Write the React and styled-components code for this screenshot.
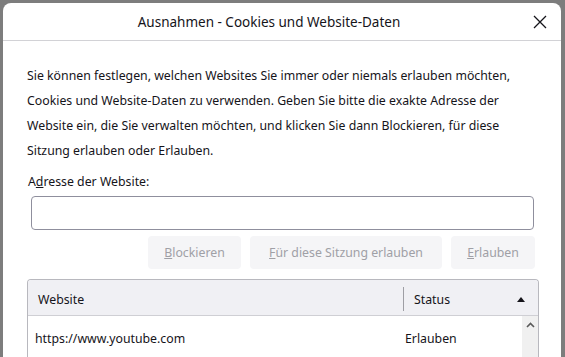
import React from "react";
import styled, { createGlobalStyle } from "styled-components";

const GlobalStyle = createGlobalStyle`
  html, body {
    margin: 0;
    padding: 0;
    background: #7d7d7d;
    overflow: hidden;
  }
  * { box-sizing: border-box; }
`;

const Page = styled.div`
  width: 565px;
  height: 357px;
  padding: 3px 4px 0 3px;
  overflow: hidden;
`;

const Dialog = styled.div`
  width: 558px;
  height: 354px;
  overflow: hidden;
  background: #fff;
  border-radius: 8px 8px 0 0;
  font-family: "Noto Sans", "Open Sans", sans-serif;
  color: #15141a;
`;

const TitleBar = styled.div`
  height: 38px;
  border-bottom: 1px solid #d2d2d6;
  display: flex;
  align-items: center;
  position: relative;
`;

const Title = styled.div`
  flex: 1;
  text-align: center;
  font-size: 13.5px;
  padding-right: 26px;
`;

const CloseButton = styled.button`
  position: absolute;
  right: 10px;
  top: 8px;
  width: 22px;
  height: 22px;
  border: none;
  background: none;
  padding: 0;
  display: flex;
  align-items: center;
  justify-content: center;
`;

const Body = styled.div`
  padding: 22px 26px 0 24px;
  font-size: 12.3px;
`;

const Intro = styled.p`
  margin: 0;
  line-height: 25px;
`;

const Label = styled.div`
  margin-top: 9px;
  line-height: 20px;
  padding-left: 1px;
`;

const Key = styled.span`
  text-decoration: underline;
`;

const Input = styled.input`
  display: block;
  margin: 4px 0 0 4px;
  width: 503px;
  height: 34px;
  border: 1px solid #8f8f9d;
  border-radius: 4px;
  outline: none;
`;

const Buttons = styled.div`
  display: flex;
  justify-content: flex-end;
  gap: 9px;
  margin-top: 6px;
`;

const Button = styled.button`
  width: ${(p) => p.$width};
  height: 33px;
  padding: 0;
  border: none;
  border-radius: 4px;
  background: #f5f5f7;
  color: #a0a0a6;
  font-family: inherit;
  font-size: 12.3px;
`;

const Table = styled.div`
  margin-top: 10px;
  width: 512px;
  border: 1px solid #b8b8be;
  border-bottom: none;
  border-radius: 4px 4px 0 0;
  overflow: hidden;
`;

const HeaderRow = styled.div`
  display: flex;
  height: 36px;
  padding-top: 3px;
  background: #f0f0f4;
  border-bottom: 1px solid #cfcfd4;
  align-items: center;
`;

const HeaderCell = styled.div`
  flex: ${(p) => p.$flex || "none"};
  width: ${(p) => p.$width || "auto"};
  height: 24px;
  display: flex;
  align-items: center;
  padding-left: 10px;
  border-left: ${(p) => (p.$divider ? "1px solid #9e9ea4" : "none")};
`;

const SortArrow = styled.span`
  margin-left: auto;
  margin-right: 13px;
  width: 0;
  height: 0;
  border-left: 4px solid transparent;
  border-right: 4px solid transparent;
  border-bottom: 5px solid #15141a;
`;

const Rows = styled.div`
  display: flex;
  height: 60px;
`;

const RowList = styled.div`
  flex: 1;
`;

const Row = styled.div`
  display: flex;
  height: 44px;
  align-items: center;
`;

const Cell = styled.div`
  flex: ${(p) => p.$flex || "none"};
  width: ${(p) => p.$width || "auto"};
  padding-left: ${(p) => p.$pad || "7px"};
`;

const Scrollbar = styled.div`
  width: 16px;
  background: #f0f0f0;
  display: flex;
  justify-content: center;
  padding-top: 6px;
`;

export default function App() {
  return (
    <Page>
      <GlobalStyle />
      <Dialog>
        <TitleBar>
          <Title>Ausnahmen - Cookies und Website-Daten</Title>
          <CloseButton aria-label="Schließen">
            <svg width="14" height="14" viewBox="0 0 14 14">
              <path d="M1 1 L13 13 M13 1 L1 13" stroke="#15141a" strokeWidth="1.3" fill="none" />
            </svg>
          </CloseButton>
        </TitleBar>
        <Body>
          <Intro>
            Sie können festlegen, welchen Websites Sie immer oder niemals erlauben möchten,
            Cookies und Website-Daten zu verwenden. Geben Sie bitte die exakte Adresse der
            Website ein, die Sie verwalten möchten, und klicken Sie dann Blockieren, für diese
            Sitzung erlauben oder Erlauben.
          </Intro>
          <Label>
            A<Key>d</Key>resse der Website:
          </Label>
          <Input />
          <Buttons>
            <Button disabled $width="93px">
              <Key>B</Key>lockieren
            </Button>
            <Button disabled $width="192px">
              <Key>F</Key>ür diese Sitzung erlauben
            </Button>
            <Button disabled $width="84px">
              <Key>E</Key>rlauben
            </Button>
          </Buttons>
          <Table>
            <HeaderRow>
              <HeaderCell $flex="1">Website</HeaderCell>
              <HeaderCell $width="135px" $divider>
                Status
                <SortArrow />
              </HeaderCell>
            </HeaderRow>
            <Rows>
              <RowList>
                <Row>
                  <Cell $flex="1">https://www.youtube.com</Cell>
                  <Cell $width="117px" $pad="0">Erlauben</Cell>
                </Row>
              </RowList>
              <Scrollbar>
                <svg width="9" height="6" viewBox="0 0 9 6">
                  <path d="M1 5 L4.5 1.5 L8 5" stroke="#5a5a5a" strokeWidth="1.6" fill="none" />
                </svg>
              </Scrollbar>
            </Rows>
          </Table>
        </Body>
      </Dialog>
    </Page>
  );
}
